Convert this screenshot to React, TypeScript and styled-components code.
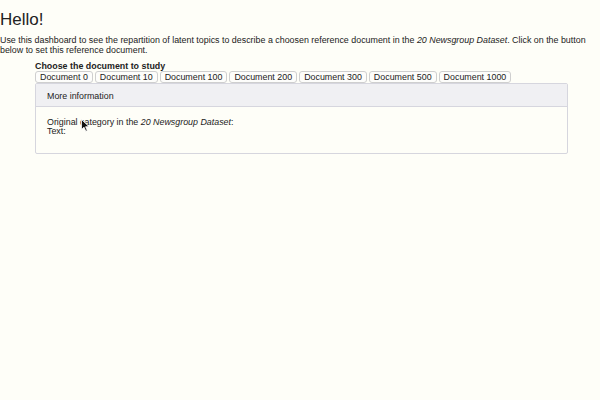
import React from 'react';
import styled, { createGlobalStyle } from 'styled-components';

const documents = [0, 10, 100, 200, 300, 500, 1000];

const GlobalStyle = createGlobalStyle`
  html, body {
    margin: 0;
    padding: 0;
    background: #fefef8;
    font-family: "Liberation Sans", Arial, sans-serif;
    color: #222;
  }
`;

const Page = styled.div`
  position: relative;
  width: 600px;
  height: 400px;
  overflow: hidden;
`;

const Title = styled.h1`
  margin: 10px 0 0;
  font-size: 17px;
  font-weight: normal;
  line-height: 20px;
`;

const Intro = styled.p`
  margin: 5px 0 0;
  font-size: 8.9px;
  line-height: 10px;
`;

const Section = styled.div`
  display: flex;
  flex-direction: column;
  margin: 6px 32px 0 35px;
`;

const Label = styled.div`
  font-size: 8.9px;
  font-weight: bold;
  line-height: 10px;
`;

const ButtonRow = styled.div`
  display: flex;
  gap: 2px;
`;

const DocButton = styled.button`
  font-family: inherit;
  font-size: 8.9px;
  line-height: 10px;
  color: #222;
  background: #fdfdfb;
  border: 1px solid #cfcfcf;
  border-radius: 3px;
  padding: 0 4px;
  height: 12px;
`;

const Panel = styled.div`
  display: flex;
  flex-direction: column;
  border: 1px solid #d6d6de;
  border-radius: 2px;
`;

const PanelHeader = styled.div`
  background: #f0f0f3;
  border-bottom: 1px solid #d6d6de;
  padding: 7px 11px 0;
  height: 15px;
  font-size: 8.9px;
  line-height: 10px;
`;

const PanelBody = styled.div`
  padding: 11px 11px 0;
  height: 35px;
  font-size: 8.9px;
  line-height: 8.5px;
`;

const Cursor = styled.svg`
  position: absolute;
  left: 81px;
  top: 119px;
`;

const App: React.FC = () => {
  return (
    <Page>
      <GlobalStyle />
      <Title>Hello!</Title>
      <Intro>
        Use this dashboard to see the repartition of latent topics to describe a choosen
        reference document in the <em>20 Newsgroup Dataset</em>. Click on the button below to
        set this reference document.
      </Intro>
      <Section>
        <Label>Choose the document to study</Label>
        <ButtonRow>
          {documents.map(doc => (
            <DocButton key={doc}>Document {doc}</DocButton>
          ))}
        </ButtonRow>
        <Panel>
          <PanelHeader>More information</PanelHeader>
          <PanelBody>
            Original category in the <em>20 Newsgroup Dataset</em>:
            <br />
            Text:
          </PanelBody>
        </Panel>
      </Section>
      <Cursor width="9" height="13" viewBox="0 0 9 13">
        <path d="M0.5 0.5 L0.5 10.5 L3 8.2 L4.8 12.3 L6.3 11.6 L4.6 7.7 L8 7.7 Z" fill="#111" stroke="#fff" strokeWidth="0.8" />
      </Cursor>
    </Page>
  );
};

export default App;
